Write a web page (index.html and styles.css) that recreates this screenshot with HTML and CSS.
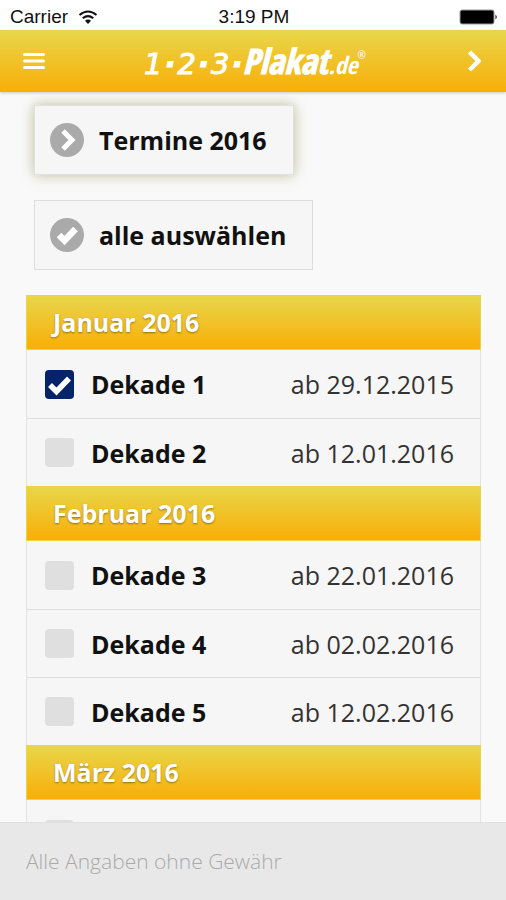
FILE: index.html
```html
<!DOCTYPE html>
<html lang="de">
<head>
    <meta charset="UTF-8">
    <meta name="viewport" content="width=device-width, initial-scale=1.0">
    <title>1-2-3-Plakat.de - Termine 2016</title>
    <link rel="stylesheet" href="styles.css">
</head>
<body>
    <div class="status-bar">
        <div class="carrier">
            <span>Carrier</span>
            <svg class="wifi" viewBox="0 0 20 14" aria-hidden="true">
                <path d="M1.5 5Q10-2 18.500 5M4.700 8.300Q10 4 15.300 8.300" fill="none" stroke="#111" stroke-width="2"/>
                <path d="M7 10.800Q10 8.400 13 10.800L10 14Z" fill="#111"/>
            </svg>
        </div>
        <span>3:19 PM</span>
        <svg class="battery" viewBox="0 0 39 16" aria-hidden="true">
            <rect x="1" y="1" width="34" height="14" rx="2" fill="#000" stroke="#999" stroke-width="1"/>
            <path d="M36.500 5.500Q39 8 36.500 10.500Z" fill="#111"/>
        </svg>
    </div>

    <header class="header">
        <button class="icon-button" type="button" aria-label="Menü">
            <svg class="menu-icon" viewBox="0 0 22 18" aria-hidden="true">
                <path d="M1.500 2.500h19M1.500 9h19M1.500 15.500h19" stroke="#fff" stroke-width="3" stroke-linecap="round"/>
            </svg>
        </button>
        <a class="logo" href="#">
            <span class="logo-numbers"><span>1</span><b>·</b><span>2</span><b>·</b><span>3</span><b>·</b></span>
            <span class="logo-name">Plakat</span>
            <span class="logo-domain">.de</span>
            <span class="logo-mark">®</span>
        </a>
        <button class="icon-button" type="button" aria-label="Weiter">
            <svg class="next-icon" viewBox="0 0 14 22" aria-hidden="true">
                <path d="M2.500 2L11.500 11L2.500 20" fill="none" stroke="#fff" stroke-width="4.500"/>
            </svg>
        </button>
    </header>

    <main class="content">
        <div class="actions">
            <button class="action active" type="button">
                <svg class="action-icon" viewBox="0 0 34 34" aria-hidden="true">
                    <circle cx="17" cy="17" r="17" fill="#aaa"/>
                    <path d="M13 8L22 17L13 26" fill="none" stroke="#fff" stroke-width="5"/>
                </svg>
                Termine 2016
            </button>
            <button class="action" type="button">
                <svg class="action-icon" viewBox="0 0 34 34" aria-hidden="true">
                    <circle cx="17" cy="17" r="17" fill="#aaa"/>
                    <path d="M9 17L14.500 22.500L25.500 11" fill="none" stroke="#fff" stroke-width="6.500"/>
                </svg>
                alle auswählen
            </button>
        </div>

        <div class="months">
            <section>
                <h2>Januar 2016</h2>
                <label class="row">
                    <input type="checkbox" checked>
                    <span class="name">Dekade 1</span>
                    <span class="date">ab 29.12.2015</span>
                </label>
                <label class="row">
                    <input type="checkbox">
                    <span class="name">Dekade 2</span>
                    <span class="date">ab 12.01.2016</span>
                </label>
            </section>
            <section>
                <h2>Februar 2016</h2>
                <label class="row">
                    <input type="checkbox">
                    <span class="name">Dekade 3</span>
                    <span class="date">ab 22.01.2016</span>
                </label>
                <label class="row">
                    <input type="checkbox">
                    <span class="name">Dekade 4</span>
                    <span class="date">ab 02.02.2016</span>
                </label>
                <label class="row">
                    <input type="checkbox">
                    <span class="name">Dekade 5</span>
                    <span class="date">ab 12.02.2016</span>
                </label>
            </section>
            <section>
                <h2>März 2016</h2>
                <label class="row">
                    <input type="checkbox" aria-label="Dekade 6">
                </label>
            </section>
        </div>
    </main>

    <footer class="footer">Alle Angaben ohne Gewähr</footer>
</body>
</html>
```
FILE: styles.css
```css
* {
    margin: 0;
    padding: 0;
    box-sizing: border-box;
}
body {
    display: flex;
    flex-direction: column;
    height: 100vh;
    font-family: "Open Sans", sans-serif;
    font-size: 25px;
    background-color: #f9f9f9;
    color: #111;
}
button {
    font: inherit;
    color: inherit;
    border: none;
    background: none;
    cursor: pointer;
}
svg {
    display: block;
}
.status-bar {
    display: grid;
    grid-template-columns: 1fr auto 1fr;
    align-items: center;
    flex: none;
    height: 30px;
    padding: 3px 8px 0 10px;
    background-color: #fff;
    font-family: "Liberation Sans", Arial, sans-serif;
    font-size: 19px;
}
.carrier {
    display: flex;
    align-items: center;
    gap: 10px;
}
.wifi {
    width: 20px;
    height: 14px;
}
.battery {
    width: 39px;
    height: 16px;
    justify-self: end;
}
.header {
    display: flex;
    align-items: center;
    justify-content: space-between;
    flex: none;
    height: 62px;
    padding: 0 10px;
    background: linear-gradient(#e8d64a, #f9ae07);
    box-shadow: 0 1px 3px rgba(0, 0, 0, 0.2);
}
.icon-button {
    display: flex;
    align-items: center;
    justify-content: center;
    width: 48px;
    height: 48px;
}
.icon-button:last-child {
    width: 44px;
}
.menu-icon {
    width: 22px;
    height: 18px;
}
.next-icon {
    width: 14px;
    height: 22px;
}
.logo {
    display: flex;
    align-items: baseline;
    padding-top: 4px;
    color: #fff;
    font-style: italic;
    line-height: 36px;
    text-decoration: none;
}
.logo-numbers {
    display: flex;
    gap: 2px;
    font-family: "DejaVu Sans", sans-serif;
    font-size: 29px;
    -webkit-text-stroke: 1px #fff;
}
.logo-name {
    font-family: "Liberation Sans Narrow", "Open Sans Condensed", "DejaVu Sans Condensed", sans-serif;
    font-size: 35px;
    font-weight: bold;
    -webkit-text-stroke: 1px #fff;
}
.logo-domain {
    font-family: "Liberation Sans Narrow", "Open Sans Condensed", "DejaVu Sans Condensed", sans-serif;
    font-size: 24px;
    font-weight: bold;
}
.logo-mark {
    align-self: flex-start;
    font-size: 10px;
    line-height: 24px;
}
.content {
    flex: 1;
    min-height: 0;
    overflow: hidden;
    padding: 13px 25px 0 26px;
}
.actions {
    display: flex;
    flex-direction: column;
    align-items: flex-start;
    gap: 25px;
    padding: 0 8px;
}
.action {
    display: flex;
    align-items: center;
    gap: 15px;
    height: 70px;
    padding: 0 26px 0 15px;
    border: 1px solid #ddd;
    background-color: #f6f6f6;
    font-weight: 700;
}
.action.active {
    border-color: #e2e2dc;
    box-shadow: 0 0 12px rgba(130, 130, 60, 0.5);
}
.action-icon {
    width: 34px;
    height: 34px;
}
.months {
    margin-top: 25px;
    border: 1px solid #e2e2e2;
    border-top: none;
    background-color: #f6f6f6;
}
h2 {
    padding: 0 26px;
    margin: 0 -1px;
    border: 1px solid #ecd640;
    background: linear-gradient(#e8d64a, #f9ae07);
    color: #fff;
    font-size: 25px;
    font-weight: 700;
    line-height: 53px;
    text-shadow: 0 1px 2px rgba(0, 0, 0, 0.4);
}
.row {
    display: flex;
    align-items: center;
    gap: 17px;
    height: 68px;
    padding: 0 26px 0 18px;
    cursor: pointer;
}
.row + .row {
    border-top: 1px solid #ddd;
}
.row input {
    appearance: none;
    width: 29px;
    height: 29px;
    border-radius: 4px;
    background-color: #dfdfdf;
}
.row input:checked {
    background: #04246a url("data:image/svg+xml,%3Csvg xmlns='http://www.w3.org/2000/svg' viewBox='0 0 29 29'%3E%3Cpath d='M5 15L11.500 21.500L24 8.500' fill='none' stroke='%23fff' stroke-width='5.500'/%3E%3C/svg%3E");
}
.name {
    font-weight: 700;
}
.date {
    margin-left: auto;
    font-weight: 400;
    color: #333;
}
.footer {
    flex: none;
    padding: 24px 26px;
    border-top: 1px solid #e0e0e0;
    background-color: #e8e8e8;
    color: #aaa;
    font-size: 21px;
    font-weight: 300;
    line-height: 29px;
}
```
